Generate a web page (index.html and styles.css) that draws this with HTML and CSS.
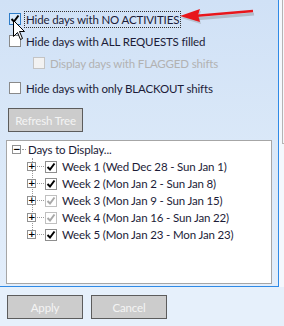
FILE: index.html
```html
<!DOCTYPE html>
<html lang="en">
<head>
    <meta charset="UTF-8">
    <meta name="viewport" content="width=device-width, initial-scale=1.0">
    <title>Display Options</title>
    <link rel="stylesheet" href="styles.css">
</head>
<body>

    <div class="window">
        <div class="panel">
            <div class="option first">
                <span class="box hot">
                    <svg width="10" height="10" viewBox="0 0 10 10"><path d="M1.5 5 L4 7.5 L8.5 1.5" fill="none" stroke="#000" stroke-width="2"/></svg>
                </span>
                <span class="label focused">Hide days with NO ACTIVITIES</span>
            </div>
            <div class="option second">
                <span class="box"></span>
                <span class="label">Hide days with ALL REQUESTS filled</span>
            </div>
            <div class="option sub disabled">
                <span class="box"></span>
                <span class="label">Display days with FLAGGED shifts</span>
            </div>
            <div class="option fourth">
                <span class="box"></span>
                <span class="label">Hide days with only BLACKOUT shifts</span>
            </div>

            <button class="btn refresh" disabled>Refresh Tree</button>

            <div class="tree">
                <div class="node root">
                    <span class="toggle">&minus;</span>
                    <span class="dots short"></span>
                    <span class="node-text">Days to Display...</span>
                </div>
                <div class="children">
                    <div class="node">
                        <span class="toggle">+</span>
                        <span class="dots"></span>
                        <span class="tick"><svg width="10" height="10" viewBox="0 0 10 10"><path d="M1.5 5 L4 7.5 L8.5 1.5" fill="none" stroke="#000" stroke-width="2"/></svg></span>
                        <span class="node-text">Week 1 (Wed Dec 28 - Sun Jan 1)</span>
                    </div>
                    <div class="node">
                        <span class="toggle">+</span>
                        <span class="dots"></span>
                        <span class="tick"><svg width="10" height="10" viewBox="0 0 10 10"><path d="M1.5 5 L4 7.5 L8.5 1.5" fill="none" stroke="#000" stroke-width="2"/></svg></span>
                        <span class="node-text">Week 2 (Mon Jan 2 - Sun Jan 8)</span>
                    </div>
                    <div class="node">
                        <span class="toggle">+</span>
                        <span class="dots"></span>
                        <span class="tick grey"><svg width="10" height="10" viewBox="0 0 10 10"><path d="M1.5 5 L4 7.5 L8.5 1.5" fill="none" stroke="#a8a8a8" stroke-width="2"/></svg></span>
                        <span class="node-text">Week 3 (Mon Jan 9 - Sun Jan 15)</span>
                    </div>
                    <div class="node">
                        <span class="toggle">+</span>
                        <span class="dots"></span>
                        <span class="tick grey"><svg width="10" height="10" viewBox="0 0 10 10"><path d="M1.5 5 L4 7.5 L8.5 1.5" fill="none" stroke="#a8a8a8" stroke-width="2"/></svg></span>
                        <span class="node-text">Week 4 (Mon Jan 16 - Sun Jan 22)</span>
                    </div>
                    <div class="node">
                        <span class="toggle">+</span>
                        <span class="dots"></span>
                        <span class="tick"><svg width="10" height="10" viewBox="0 0 10 10"><path d="M1.5 5 L4 7.5 L8.5 1.5" fill="none" stroke="#000" stroke-width="2"/></svg></span>
                        <span class="node-text">Week 5 (Mon Jan 23 - Mon Jan 23)</span>
                    </div>
                </div>
            </div>
        </div>

        <div class="side"></div>

        <div class="footer">
            <button class="btn" disabled>Apply</button>
            <button class="btn" disabled>Cancel</button>
        </div>

        <!-- annotation arrow drawn over the screenshot -->
        <svg class="red-arrow" width="110" height="18" viewBox="0 0 110 18">
            <path d="M14 10 L73 5" stroke="#777" stroke-opacity="0.35" stroke-width="3" transform="translate(1,2)"/>
            <path d="M0 9 L20 2 L18 8 L20 15 Z" fill="#777" fill-opacity="0.3" transform="translate(1,2)"/>
            <path d="M14 9 L73 4" stroke="#e8161b" stroke-width="2.5"/>
            <path d="M0 9 L20 2 L18 8 L20 15 Z" fill="#e8161b"/>
        </svg>

        <!-- mouse pointer -->
        <svg class="pointer" width="13" height="21" viewBox="0 0 13 21">
            <path d="M0.5 0.5 L0.5 16.5 L4.5 12.5 L7.5 19.5 L9.5 18.5 L6.5 11.5 L11.5 11.5 Z" fill="#fff" stroke="#000" stroke-width="1"/>
        </svg>
    </div>

</body>
</html>
```

FILE: styles.css
```css
* {
    box-sizing: border-box;
}

body {
    margin: 0;
    font-family: 'Lato', 'Liberation Sans', sans-serif;
    font-size: 11.5px;
    letter-spacing: -0.15px;
    color: #1c1c38;
    background: #f2f6fc;
}

.window {
    position: relative;
    width: 284px;
    height: 326px;
    display: grid;
    grid-template-columns: 279px 5px;
    grid-template-rows: 287px 39px;
    overflow: hidden;
}

.panel {
    background: linear-gradient(#d0e1f6, #dae8f8 50%, #e3eefb);
    border-right: 1px solid #2f8ae6;
    border-bottom: 1px solid #2f8ae6;
    padding-top: 11px;
}

.side {
    background: #f4f8fd;
    position: relative;
}

.side::before {
    content: "";
    position: absolute;
    left: 3px;
    top: 0;
    width: 3px;
    height: 143px;
    border-left: 1px solid #b4b4b4;
    border-bottom: 1px solid #b4b4b4;
}

/* option checkboxes */
.option {
    display: flex;
    align-items: center;
    height: 16px;
    margin-left: 9px;
}

.option.second {
    margin-top: 6px;
}

.option.sub {
    margin-top: 6px;
    margin-left: 33px;
}

.option.fourth {
    margin-top: 9px;
}

.box {
    width: 12px;
    height: 12px;
    border: 1px solid #8a8a8a;
    background: #fff;
    display: flex;
    align-items: center;
    justify-content: center;
    flex-shrink: 0;
}

.box.hot {
    border-color: #2d7cc8;
    background: #d8eafc;
}

.label {
    margin-left: 4px;
    white-space: nowrap;
    padding: 0 1px;
    line-height: 15px;
}

.label.focused {
    outline: 1px dotted #333;
    outline-offset: 0;
}

.disabled .box {
    border-color: #c4c4c4;
    background: #f2f2f2;
}

.disabled .label {
    color: #b2b2b2;
}

/* buttons */
.btn {
    display: block;
    font-family: inherit;
    font-size: 11.5px;
    letter-spacing: inherit;
    color: #f4f4f4;
    background: #cccccc;
    border: 1px solid #5c5c5c;
    height: 24px;
    padding: 0;
}

.refresh {
    width: 75px;
    margin: 12px 0 0 8px;
}

/* tree view */
.tree {
    margin: 8px 0 0 6px;
    width: 266px;
    height: 144px;
    background: #fff;
    border: 1px solid #a6a6a6;
}

.node {
    display: flex;
    align-items: center;
    height: 17px;
    position: relative;
}

.root {
    padding-left: 5px;
}

.children {
    position: relative;
    padding-left: 20px;
}

.children::before {
    content: "";
    position: absolute;
    left: 25px;
    top: 0;
    height: 76px;
    border-left: 1px dotted #9a9a9a;
}

.toggle {
    width: 9px;
    height: 9px;
    border: 1px solid #919191;
    background: #fff;
    font-size: 9px;
    line-height: 6px;
    letter-spacing: 0;
    text-align: center;
    color: #000;
    font-family: 'DejaVu Sans', sans-serif;
    font-weight: bold;
    position: relative;
    z-index: 1;
    flex-shrink: 0;
}

.dots {
    width: 7px;
    margin-left: 1px;
    border-top: 1px dotted #9a9a9a;
}

.dots.short {
    width: 4px;
}

.tick {
    width: 12px;
    height: 12px;
    border: 1px solid #8e8e8e;
    display: flex;
    align-items: center;
    justify-content: center;
    margin-left: 1px;
    flex-shrink: 0;
}

.tick.grey {
    border-color: #c0c0c0;
}

.node-text {
    margin-left: 5px;
    white-space: nowrap;
}

.root .node-text {
    margin-left: 2px;
}

/* footer */
.footer {
    grid-column: 1 / 3;
    background: #e6f0fb;
    display: flex;
    gap: 8px;
    padding: 8px 0 0 7px;
}

.footer .btn {
    width: 76px;
}

/* overlays */
.red-arrow {
    position: absolute;
    left: 180px;
    top: 7px;
}

.pointer {
    position: absolute;
    left: 13px;
    top: 20px;
}
```
